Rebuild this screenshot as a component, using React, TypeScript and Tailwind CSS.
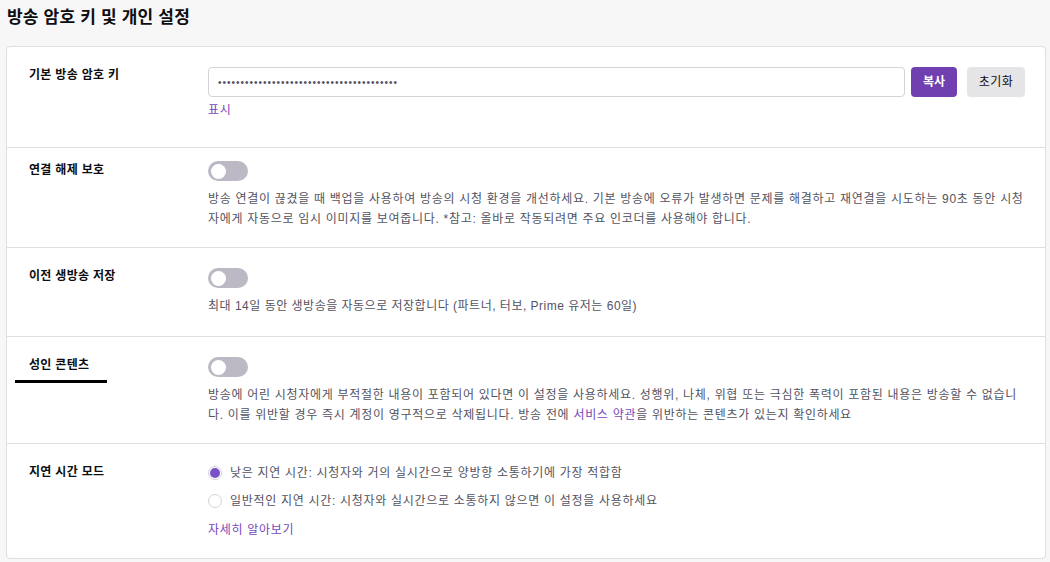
import React from "react";

const font = { fontFamily: '"Liberation Sans", "Noto Sans CJK KR", sans-serif' };

function Toggle() {
  return (
    <div className="w-[40px] h-[20px] rounded-full bg-[#bcb8c4] flex items-center px-[3px]">
      <div className="w-[15px] h-[15px] rounded-full bg-white" />
    </div>
  );
}

function Row({ label, children, underline, className, labelTop }: { label: string; children: React.ReactNode; underline?: boolean; className?: string; labelTop?: string }) {
  return (
    <div className={"flex border-b border-[#dedee3] last:border-b-0 " + (className ?? "")}>
      <div className={"w-[201px] shrink-0 pl-[22px] relative " + (labelTop ?? "pt-[20px]")}>
        <div className="text-[12px] font-bold text-[#0e0e10] leading-[16px] tracking-[0.3px]">{label}</div>
        {underline && <div className="absolute left-[8px] top-[43px] w-[92px] h-[3px] bg-black" />}
      </div>
      <div className="flex-1 pr-[20px]">{children}</div>
    </div>
  );
}

const desc = "text-[12px] leading-[20px] text-[#53535f] tracking-[0.7px]";

export default function App() {
  return (
    <div className="w-[1050px] h-[562px] bg-[#f7f7f8] overflow-hidden" style={font}>
      <div className="pl-[7px] pt-[5px] h-[46px] text-[17px] font-semibold text-[#0e0e10] tracking-[0.2px]">방송 암호 키 및 개인 설정</div>
      <div className="ml-[6px] mr-[4px] bg-white border border-[#dedee3] rounded-[4px]">
        <Row label="기본 방송 암호 키" className="h-[101px]">
          <div className="pt-[20px] flex items-center">
            <div className="flex-1 h-[30px] border border-[#d3d3d9] rounded-[4px] flex items-center px-[9px] text-[10px] text-[#53535f] tracking-[1px]">
              ••••••••••••••••••••••••••••••••••••••••
            </div>
            <button className="ml-[6px] w-[46px] h-[30px] rounded-[4px] bg-[#7040b0] text-white text-[12px] font-bold">복사</button>
            <button className="ml-[10px] w-[58px] h-[30px] rounded-[4px] bg-[#e5e5e8] text-[#0e0e10] text-[12px] tracking-[0.5px]">초기화</button>
          </div>
          <div className={"mt-[4px] text-[12px] text-[#7548b9] tracking-[0.7px]"}>표시</div>
        </Row>
        <Row label="연결 해제 보호" className="h-[100px]" labelTop="pt-[14px]">
          <div className="pt-[13px]"><Toggle /></div>
          <p className={"mt-[8px] " + desc}>
            방송 연결이 끊겼을 때 백업을 사용하여 방송의 시청 환경을 개선하세요. 기본 방송에 오류가 발생하면 문제를 해결하고 재연결을 시도하는 90초 동안 시청자에게 자동으로 임시 이미지를 보여줍니다. *참고: 올바로 작동되려면 주요 인코더를 사용해야 합니다.
          </p>
        </Row>
        <Row label="이전 생방송 저장" className="h-[89px]">
          <div className="pt-[20px]"><Toggle /></div>
          <p className={"mt-[8px] text-[12px] leading-[20px] text-[#53535f] tracking-[0.5px]"}>
            최대 14일 동안 생방송을 자동으로 저장합니다 (파트너, 터보, Prime 유저는 60일)
          </p>
        </Row>
        <Row label="성인 콘텐츠" underline className="h-[107px]">
          <div className="pt-[20px]"><Toggle /></div>
          <p className={"mt-[8px] " + desc}>
            방송에 어린 시청자에게 부적절한 내용이 포함되어 있다면 이 설정을 사용하세요. 성행위, 나체, 위협 또는 극심한 폭력이 포함된 내용은 방송할 수 없습니다. 이를 위반할 경우 즉시 계정이 영구적으로 삭제됩니다. 방송 전에 <span className="text-[#7548b9]">서비스 약관</span>을 위반하는 콘텐츠가 있는지 확인하세요
          </p>
        </Row>
        <Row label="지연 시간 모드" className="h-[114px]">
          <div className="pt-[19px] flex flex-col gap-[8px]">
            <div className={"flex items-center gap-[8px] " + desc + " leading-[19px]"}>
              <div className="w-[14px] h-[14px] rounded-full border border-[#d3d3d9] flex items-center justify-center shrink-0">
                <div className="w-[10px] h-[10px] rounded-full bg-[#7a52c8]" />
              </div>
              낮은 지연 시간: 시청자와 거의 실시간으로 양방향 소통하기에 가장 적합함
            </div>
            <div className={"flex items-center gap-[8px] " + desc + " leading-[19px]"}>
              <div className="w-[14px] h-[14px] rounded-full border border-[#d3d3d9] shrink-0" />
              일반적인 지연 시간: 시청자와 실시간으로 소통하지 않으면 이 설정을 사용하세요
            </div>
          </div>
          <div className="mt-[10px] text-[12px] text-[#7548b9] tracking-[0.7px]">자세히 알아보기</div>
        </Row>
      </div>
    </div>
  );
}
